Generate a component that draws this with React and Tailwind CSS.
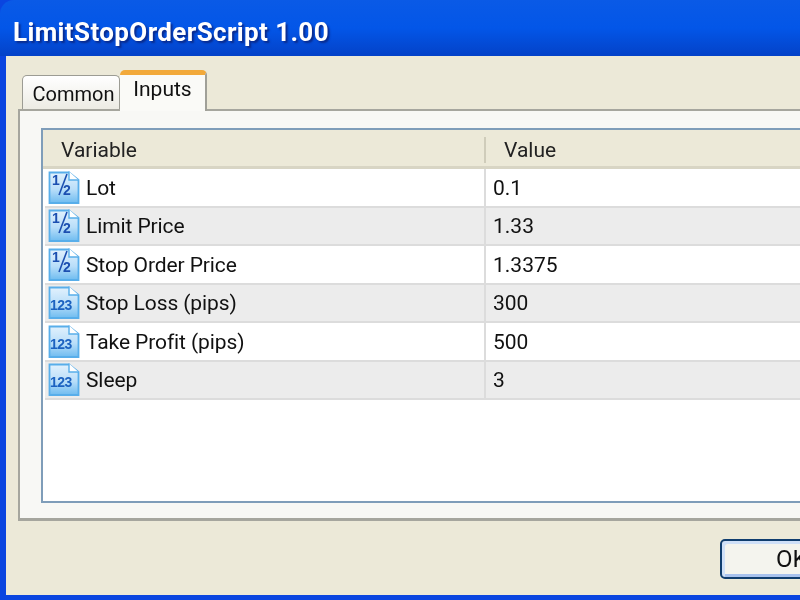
const rows = [
  { name: "Lot", value: "0.1", kind: "half" },
  { name: "Limit Price", value: "1.33", kind: "half" },
  { name: "Stop Order Price", value: "1.3375", kind: "half" },
  { name: "Stop Loss (pips)", value: "300", kind: "int" },
  { name: "Take Profit (pips)", value: "500", kind: "int" },
  { name: "Sleep", value: "3", kind: "int" },
];

function TypeIcon({ kind }) {
  const gradId = "doc-" + kind;
  return (
    <svg width="32" height="35" viewBox="0 0 32 35" className="shrink-0">
      <defs>
        <linearGradient id={gradId} x1="0" y1="0" x2="0" y2="1">
          <stop offset="0" stopColor="#e2f1fd" />
          <stop offset="0.55" stopColor="#b9def9" />
          <stop offset="1" stopColor="#6fbcf0" />
        </linearGradient>
      </defs>
      <path d="M1.5 2.5 H21 L30.5 10 V33 H1.5 Z" fill={`url(#${gradId})`} stroke="#58aeea" strokeWidth="1.8" />
      <path d="M21 1.5 V10 H30.5" fill="#ffffff" stroke="#58aeea" strokeWidth="1.4" />
      {kind === "half" ? (
        <>
          <text x="4" y="15" fontFamily="'Liberation Sans', sans-serif" fontWeight="700" fontSize="14" fill="#1c4fb0">1</text>
          <path d="M19 4 L11 25" stroke="#1c4fb0" strokeWidth="1.6" />
          <text x="15" y="25" fontFamily="'Liberation Sans', sans-serif" fontWeight="700" fontSize="14" fill="#1c4fb0">2</text>
        </>
      ) : (
        <text x="2" y="25" fontFamily="'Liberation Sans', sans-serif" fontWeight="700" fontSize="14" letterSpacing="-0.5" fill="#1c62c0">123</text>
      )}
    </svg>
  );
}

function Row({ row, index }) {
  return (
    <div className={`flex h-[38.5px] border-b-2 border-[#dcdcdc] ${index % 2 ? "bg-[#ececec]" : "bg-white"}`}>
      <div className="flex w-[441px] items-center gap-[6px] border-r-2 border-[#dcdcdc] pl-[3px]">
        <TypeIcon kind={row.kind} />
        <span className="pt-[2px] text-[21px] tracking-[-0.1px] text-[#111]">{row.name}</span>
      </div>
      <div className="flex items-center pl-[7px] pt-[2px] text-[21px] text-[#111]">{row.value}</div>
    </div>
  );
}

export default function App() {
  return (
    <div className="flex h-[600px] w-[800px] flex-col overflow-hidden bg-[#0a45e0] font-['Roboto',sans-serif] blur-[0.5px]">
      {/* title bar */}
      <div className="flex h-[56px] shrink-0 items-center rounded-tl-[14px] bg-gradient-to-b from-[#0a5ae6] via-[#0356e8] to-[#0442c8] pl-[13px] pt-[8px]">
        <span className="text-[26px] font-bold tracking-[0.38px] text-white [text-shadow:2px_2px_2px_#0a2a8c]">
          LimitStopOrderScript 1.00
        </span>
      </div>

      <div className="ml-[6px] flex h-[539px] flex-col bg-[#ece9d8] pl-[12px]">
        {/* tabs */}
        <div className="flex h-[53px] shrink-0 items-end pl-[4px]">
          <div className="-mb-px flex h-[35px] w-[98px] items-center justify-center rounded-t-[5px] border border-b-0 border-[#9c9c94] bg-gradient-to-b from-white to-[#ecebe3] pl-[5px] pt-[2px] text-[20px] text-[#111]">
            Common
          </div>
          <div className="relative z-10 -mb-[2px] flex h-[41px] w-[87px] items-start justify-center rounded-t-[5px] border-r-2 border-t-[5px] border-r-[#a0a098] border-t-[#f2a93a] bg-[#fafaf7] pt-[1px] text-[21px] leading-[26px] text-[#111]">
            Inputs
          </div>
        </div>

        {/* panel */}
        <div className="flex h-[412px] flex-col border-b-[3px] border-l-2 border-t-2 border-[#a6a69e] bg-[#f8f8f5] pl-[21px] pt-[17px]">
          <div className="flex h-[375px] flex-col border-b-2 border-l-2 border-t-2 border-[#7f9db9] bg-white">
            <div className="flex h-[39px] shrink-0 items-center border-b-[3px] border-[#d8d5c4] bg-[#ece9d8] text-[21px] text-[#222]">
              <div className="ml-[2px] flex h-full w-[439px] items-center pl-[16px] pt-[5px]">
                <span>Variable</span>
              </div>
              <div className="mt-[3px] h-[26px] w-[2px] bg-[#cfccba]" />
              <div className="pl-[18px] pt-[5px]">Value</div>
            </div>
            <div className="ml-[2px] flex flex-col">
              {rows.map((row, i) => (
                <Row key={row.name} row={row} index={i} />
              ))}
            </div>
          </div>
        </div>

        {/* buttons */}
        <div className="flex flex-1 justify-start pl-[702px] pt-[18px]">
          <div className="flex h-[40px] w-[120px] shrink-0 items-center rounded-[5px] border-2 border-[#0f3d6e] bg-[#f4f4ee] pl-[54px] text-[24px] text-[#111] shadow-[inset_3px_3px_0_#cfe0f8,inset_-3px_-3px_0_#a8c2ee]">
            OK
          </div>
        </div>
      </div>
    </div>
  );
}
